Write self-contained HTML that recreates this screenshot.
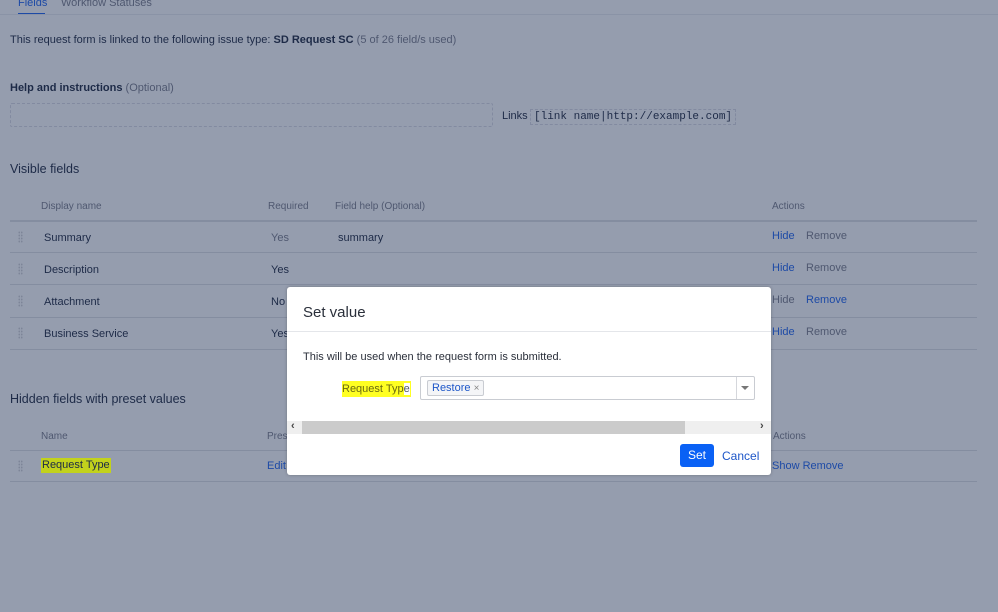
<!DOCTYPE html>
<html><head><meta charset="utf-8"><style>
*{margin:0;padding:0;box-sizing:border-box}
body{width:998px;height:612px;background:#959dae;font-family:"Liberation Sans",sans-serif;font-size:11px;color:#1d2a47;position:relative;overflow:hidden}
.a{position:absolute;white-space:nowrap}
.g{color:#4f5870}
.lk{color:#1d4aa6}
.line{position:absolute;height:1px;background:#848da0}
.grip{position:absolute;width:5px;height:12px;background-image:radial-gradient(circle,#7d8598 0.8px,transparent 1px);background-size:2.5px 3px}
.dlg{position:absolute;left:287px;top:287px;width:484px;height:188px;background:#fff;border-radius:3px;box-shadow:0 0 3px rgba(0,0,0,.25)}
</style></head><body>
<div class="a lk" style="left:18px;top:-3px">Fields</div>
<div style="position:absolute;left:18px;top:13px;width:27px;height:2px;background:#1d4aa6"></div>
<div class="a g" style="left:61px;top:-3px">Workflow Statuses</div>
<div class="line" style="left:0;top:14px;width:998px;background:#8a93a6"></div>

<div class="a" style="left:10px;top:34px">This request form is linked to the following issue type: <b>SD Request SC</b> <span class="g">(5 of 26 field/s used)</span></div>
<div class="a" style="left:10px;top:82px"><b>Help and instructions</b> <span class="g">(Optional)</span></div>
<div style="position:absolute;left:10px;top:103px;width:483px;height:24px;border:1px dashed #828aa0;border-radius:2px"></div>
<div class="a" style="left:502px;top:110px">Links</div>
<div class="a" style="left:530px;top:109px;border:1px dashed #828aa0;padding:1px 3px;font-family:'Liberation Mono',monospace;font-size:11px">[link name|http://example.com]</div>

<div class="a" style="left:10px;top:162px;font-size:12.5px">Visible fields</div>
<div class="a g" style="left:41px;top:201px;font-size:10px">Display name</div>
<div class="a g" style="left:268px;top:201px;font-size:10px">Required</div>
<div class="a g" style="left:335px;top:201px;font-size:10px">Field help (Optional)</div>
<div class="a g" style="left:772px;top:201px;font-size:10px">Actions</div>
<div class="line" style="left:10px;top:220px;width:967px;height:2px"></div>

<div class="grip" style="left:18px;top:231px"></div>
<div class="a" style="left:44px;top:232px">Summary</div><div class="a g" style="left:271px;top:232px">Yes</div><div class="a" style="left:338px;top:232px">summary</div>
<div class="a lk" style="left:772px;top:230px">Hide</div><div class="a g" style="left:806px;top:230px">Remove</div>
<div class="line" style="left:10px;top:252px;width:967px"></div>
<div class="grip" style="left:18px;top:263px"></div>
<div class="a" style="left:44px;top:264px">Description</div><div class="a" style="left:271px;top:264px">Yes</div>
<div class="a lk" style="left:772px;top:262px">Hide</div><div class="a g" style="left:806px;top:262px">Remove</div>
<div class="line" style="left:10px;top:284px;width:967px"></div>
<div class="grip" style="left:18px;top:295px"></div>
<div class="a" style="left:44px;top:296px">Attachment</div><div class="a" style="left:271px;top:296px">No</div>
<div class="a g" style="left:772px;top:294px">Hide</div><div class="a lk" style="left:806px;top:294px">Remove</div>
<div class="line" style="left:10px;top:317px;width:967px"></div>
<div class="grip" style="left:18px;top:327px"></div>
<div class="a" style="left:44px;top:328px">Business Service</div><div class="a" style="left:271px;top:328px">Yes</div>
<div class="a lk" style="left:772px;top:326px">Hide</div><div class="a g" style="left:806px;top:326px">Remove</div>
<div class="line" style="left:10px;top:349px;width:967px"></div>

<div class="a" style="left:10px;top:392px;font-size:12.5px">Hidden fields with preset values</div>
<div class="a g" style="left:41px;top:431px;font-size:10px">Name</div>
<div class="a g" style="left:267px;top:431px;font-size:10px">Prese</div>
<div class="a g" style="left:773px;top:431px;font-size:10px">Actions</div>
<div class="line" style="left:10px;top:450px;width:967px"></div>
<div class="grip" style="left:18px;top:460px"></div>
<div class="a" style="left:41px;top:458px;background:#c2d21c;padding:0 1px;height:15px;line-height:15px">Request Type</div>
<div class="a lk" style="left:267px;top:460px">Edit</div>
<div class="a lk" style="left:772px;top:460px">Show Remove</div>
<div class="line" style="left:10px;top:481px;width:967px"></div>

<div class="dlg">
<div class="a" style="left:16px;top:17px;font-size:15px;color:#2a2f3a">Set value</div>
<div style="position:absolute;left:0;top:44px;width:484px;height:1px;background:#e4e6ea"></div>
<div class="a" style="left:16px;top:64px;color:#2a2f3a">This will be used when the request form is submitted.</div>
<div class="a" style="left:55px;top:94px;height:16px;line-height:16px;color:#6a6a10;background:#ffff22;padding-right:1px">Request Typ<span style="background:#fff;color:#505a6a">e</span></div>
<div style="position:absolute;left:133px;top:89px;width:335px;height:24px;border:1px solid #c9ccd2;border-radius:2px"></div>
<div style="position:absolute;left:449px;top:90px;width:1px;height:22px;background:#d5d7dc"></div>
<div style="position:absolute;left:454px;top:99px;width:0;height:0;border-left:4px solid transparent;border-right:4px solid transparent;border-top:4px solid #777"></div>
<div class="a" style="left:140px;top:93px;height:16px;line-height:14px;border:1px solid #c9ccd2;border-radius:2px;padding:0 4px;background:#f4f5f7;color:#1d56c8">Restore <span style="color:#888;font-size:10px">×</span></div>
<div style="position:absolute;left:0;top:134px;width:484px;height:13px;background:#efefef"></div>
<div style="position:absolute;left:15px;top:134px;width:383px;height:13px;background:#cbcbcb"></div>
<div class="a" style="left:4px;top:133px;font-size:11px;font-weight:bold;color:#444">‹</div>
<div class="a" style="left:473px;top:133px;font-size:11px;font-weight:bold;color:#444">›</div>
<div class="a" style="left:393px;top:157px;width:34px;height:23px;background:#0a61f5;border-radius:3px;color:#fff;line-height:23px;text-align:center;font-size:12px">Set</div>
<div class="a" style="left:435px;top:162px;color:#1d56c8;font-size:12px">Cancel</div>
</div>
</body></html>
